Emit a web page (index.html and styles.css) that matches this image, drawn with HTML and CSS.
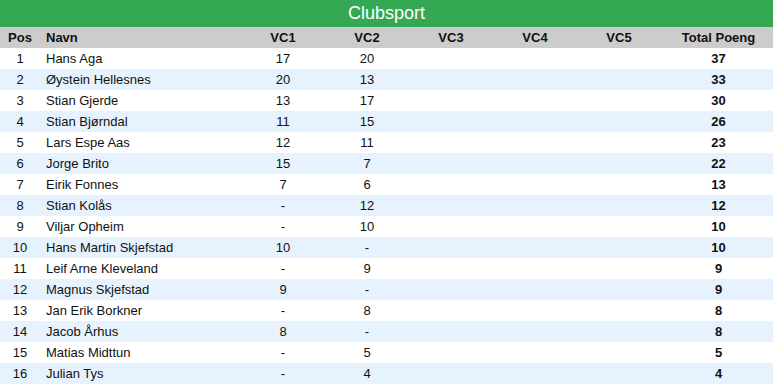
FILE: index.html
```html
<!DOCTYPE html>
<html>

<head>
  <meta charset="UTF-8">
  <title>Clubsport</title>
  <link rel="stylesheet" href="styles.css">
</head>

<body>
  <div class="board">
    <div class="title">Clubsport</div>
    <table class="standings">
      <colgroup>
        <col class="col-pos">
        <col class="col-name">
        <col class="col-vc">
        <col class="col-vc">
        <col class="col-vc">
        <col class="col-vc">
        <col class="col-vc">
        <col class="col-total">
      </colgroup>
      <thead>
        <tr>
          <th>Pos</th>
          <th class="name">Navn</th>
          <th>VC1</th>
          <th>VC2</th>
          <th>VC3</th>
          <th>VC4</th>
          <th>VC5</th>
          <th class="total">Total Poeng</th>
        </tr>
      </thead>
      <tbody>
        <tr><td>1</td><td class="name">Hans Aga</td><td>17</td><td>20</td><td></td><td></td><td></td><td class="total">37</td></tr>
        <tr><td>2</td><td class="name">Øystein Hellesnes</td><td>20</td><td>13</td><td></td><td></td><td></td><td class="total">33</td></tr>
        <tr><td>3</td><td class="name">Stian Gjerde</td><td>13</td><td>17</td><td></td><td></td><td></td><td class="total">30</td></tr>
        <tr><td>4</td><td class="name">Stian Bjørndal</td><td>11</td><td>15</td><td></td><td></td><td></td><td class="total">26</td></tr>
        <tr><td>5</td><td class="name">Lars Espe Aas</td><td>12</td><td>11</td><td></td><td></td><td></td><td class="total">23</td></tr>
        <tr><td>6</td><td class="name">Jorge Brito</td><td>15</td><td>7</td><td></td><td></td><td></td><td class="total">22</td></tr>
        <tr><td>7</td><td class="name">Eirik Fonnes</td><td>7</td><td>6</td><td></td><td></td><td></td><td class="total">13</td></tr>
        <tr><td>8</td><td class="name">Stian Kolås</td><td>-</td><td>12</td><td></td><td></td><td></td><td class="total">12</td></tr>
        <tr><td>9</td><td class="name">Viljar Opheim</td><td>-</td><td>10</td><td></td><td></td><td></td><td class="total">10</td></tr>
        <tr><td>10</td><td class="name">Hans Martin Skjefstad</td><td>10</td><td>-</td><td></td><td></td><td></td><td class="total">10</td></tr>
        <tr><td>11</td><td class="name">Leif Arne Kleveland</td><td>-</td><td>9</td><td></td><td></td><td></td><td class="total">9</td></tr>
        <tr><td>12</td><td class="name">Magnus Skjefstad</td><td>9</td><td>-</td><td></td><td></td><td></td><td class="total">9</td></tr>
        <tr><td>13</td><td class="name">Jan Erik Borkner</td><td>-</td><td>8</td><td></td><td></td><td></td><td class="total">8</td></tr>
        <tr><td>14</td><td class="name">Jacob Århus</td><td>8</td><td>-</td><td></td><td></td><td></td><td class="total">8</td></tr>
        <tr><td>15</td><td class="name">Matias Midttun</td><td>-</td><td>5</td><td></td><td></td><td></td><td class="total">5</td></tr>
        <tr><td>16</td><td class="name">Julian Tys</td><td>-</td><td>4</td><td></td><td></td><td></td><td class="total">4</td></tr>
      </tbody>
    </table>
  </div>
</body>

</html>
```

FILE: styles.css
```css
body {
  margin: 0;
  font-family: "Liberation Sans", Arial, sans-serif;
  color: #111;
  background: #fff;
}

.board {
  width: 773px;
}

.title {
  height: 27px;
  line-height: 27px;
  background: #34a853;
  color: #fff;
  font-size: 18px;
  text-align: center;
}

.standings {
  width: 100%;
  border-collapse: collapse;
  table-layout: fixed;
  font-size: 13px;
}

.col-pos {
  width: 40px;
}

.col-name {
  width: 201px;
}

.col-vc {
  width: 84px;
}

.col-total {
  width: 112px;
}

.standings th,
.standings td {
  height: 21px;
  padding: 0;
  text-align: center;
  white-space: nowrap;
}

.standings th {
  background: #cccccc;
  font-weight: bold;
}

.standings .name {
  text-align: left;
  padding-left: 6px;
}

.standings .total {
  font-weight: bold;
  padding-left: 3px;
}

.standings tbody tr:nth-child(even) {
  background: #e6f2fd;
}
```
